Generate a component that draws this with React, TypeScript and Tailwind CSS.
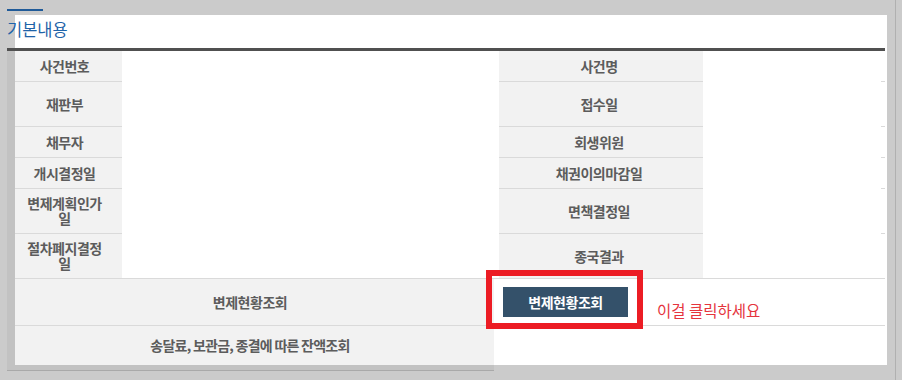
import React from "react";

const rows: { l: string; r: string; h: string; border: boolean }[] = [
  { l: "사건번호", r: "사건명", h: "h-[31px]", border: true },
  { l: "재판부", r: "접수일", h: "h-[45px]", border: true },
  { l: "채무자", r: "회생위원", h: "h-[31px]", border: true },
  { l: "개시결정일", r: "채권이의마감일", h: "h-[31px]", border: true },
  { l: "변제계획인가일", r: "면책결정일", h: "h-[45px]", border: true },
  { l: "절차폐지결정일", r: "종국결과", h: "h-[44px]", border: false },
];

const th =
  "flex items-center justify-center text-center bg-[#f2f2f2] text-[#5c5c5c] font-bold text-[14px] leading-[15px]";

export default function App() {
  return (
    <div
      className="flex w-[902px] h-[380px] bg-[#cbcbcb] overflow-hidden"
      style={{ fontFamily: '"Noto Sans CJK KR", "Noto Sans", sans-serif' }}
    >
      <div className="w-[895px] pt-[9px]">
        <div className="ml-[7px] w-[36px] h-[2px] bg-[#1f5a98]" />
        <div className="mt-[4px] ml-[15px] w-[872px] bg-white">
          <div className="-ml-[8px] h-[33px] pt-[4px] text-[16.5px] leading-[20px] text-[#1f63a8]">
            기본내용
          </div>
          <div className="-ml-[8px] w-[878px] h-[3px] bg-[#505050]" />
          <div className="-ml-[8px] flex">
            <div className="w-[8px] bg-[#c2c2c2]" />
            <div className="relative w-[870px]">
              {rows.map((r, i) => (
                <div
                  key={i}
                  className={`grid grid-cols-[107px_377px_204px_178px_4px] ${r.h}`}
                >
                  <div className={`${th} tracking-[-0.5px] pl-[10px] pr-[18px] ${r.border ? "border-b border-[#dadada]" : ""}`}>
                    {r.l}
                  </div>
                  <div className="bg-white" />
                  <div className={`${th} tracking-[-0.5px] pl-[10px] pr-[14px] ${r.border ? "border-b border-[#dadada]" : ""}`}>
                    {r.r}
                  </div>
                  <div className="bg-white" />
                  <div className={`bg-white ${r.border ? "border-b border-[#dadada]" : ""}`} />
                </div>
              ))}
              <div className="flex h-[47px] border-t border-[#dadada]">
                <div className={`${th} tracking-[-0.5px] w-[479px] pr-[9px]`}>변제현황조회</div>
                <div className="flex flex-1 items-center bg-white pl-[9px]">
                  <button className="w-[125px] h-[30px] bg-[#34516a] text-white font-bold text-[14px] tracking-[-0.5px] leading-[30px]">
                    변제현황조회
                  </button>
                  <span className="ml-[29px] mt-[16px] text-[15.5px] leading-[18px] text-[#e5343d]">
                    이걸 클릭하세요
                  </span>
                </div>
              </div>
              <div className="flex h-[40px] border-t border-[#dadada]">
                <div className={`${th} tracking-[-0.75px] w-[479px] pr-[9px]`}>송달료, 보관금, 종결에 따른 잔액조회</div>
                <div className="flex-1 bg-white" />
              </div>
              <div className="absolute left-[471px] top-[219px] w-[157px] h-[59px] border-[6px] border-[#ec1c24]" />
            </div>
          </div>
        </div>
        <div className="ml-[7px] w-[487px] h-[5px] bg-[#c2c2c2]" />
        <div className="ml-[7px] w-[487px] h-px bg-[#a9a9a9]" />
      </div>
      <div className="w-px h-full bg-[#b0b0b0]" />
      <div className="flex-1 bg-[#cbcbcb]" />
    </div>
  );
}
